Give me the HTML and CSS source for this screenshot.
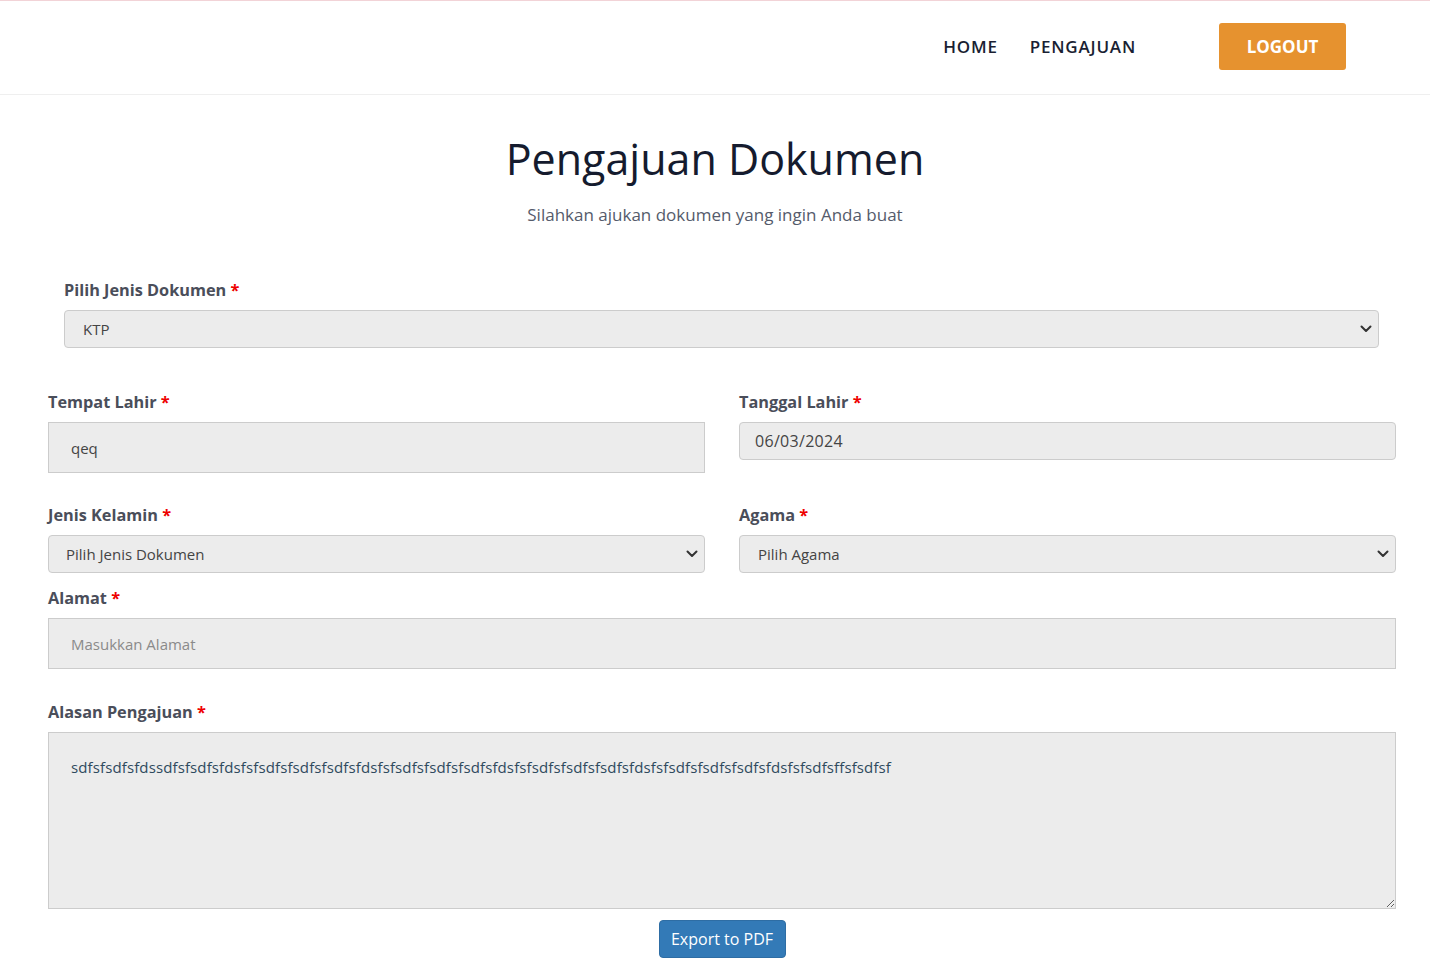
FILE: index.html
```html
<!DOCTYPE html>
<html lang="id">
<head>
<meta charset="utf-8">
<title>Pengajuan Dokumen</title>
<link rel="stylesheet" href="styles.css">
</head>
<body>
<header class="topbar">
  <nav class="nav">
    <a href="#" class="nav-link">HOME</a>
    <a href="#" class="nav-link">PENGAJUAN</a>
  </nav>
  <button class="logout">LOGOUT</button>
</header>
<main class="page">
  <div class="intro">
    <h1 class="title">Pengajuan Dokumen</h1>
    <p class="subtitle">Silahkan ajukan dokumen yang ingin Anda buat</p>
  </div>
  <form class="form">
    <div class="group group-top">
      <label class="label">Pilih Jenis Dokumen <span class="req">*</span></label>
      <div class="select-wrap">
        <select class="field select sel-top"><option>KTP</option></select>
        <svg class="chev" viewBox="0 0 12 8" width="12" height="8"><path d="M1.5 1.5 6 6l4.5-4.5" fill="none" stroke="#333" stroke-width="2" stroke-linecap="round" stroke-linejoin="round"/></svg>
      </div>
    </div>
    <div class="row row-2">
      <div class="group">
        <label class="label">Tempat Lahir <span class="req">*</span></label>
        <input class="field tall" type="text" value="qeq">
      </div>
      <div class="group">
        <label class="label">Tanggal Lahir <span class="req">*</span></label>
        <input class="field short date" type="text" value="06/03/2024">
      </div>
    </div>
    <div class="row row-3">
      <div class="group">
        <label class="label">Jenis Kelamin <span class="req">*</span></label>
        <div class="select-wrap">
          <select class="field select sel-left"><option>Pilih Jenis Dokumen</option></select>
          <svg class="chev" viewBox="0 0 12 8" width="12" height="8"><path d="M1.5 1.5 6 6l4.5-4.5" fill="none" stroke="#333" stroke-width="2" stroke-linecap="round" stroke-linejoin="round"/></svg>
        </div>
      </div>
      <div class="group">
        <label class="label">Agama <span class="req">*</span></label>
        <div class="select-wrap">
          <select class="field select sel-right"><option>Pilih Agama</option></select>
          <svg class="chev" viewBox="0 0 12 8" width="12" height="8"><path d="M1.5 1.5 6 6l4.5-4.5" fill="none" stroke="#333" stroke-width="2" stroke-linecap="round" stroke-linejoin="round"/></svg>
        </div>
      </div>
    </div>
    <div class="group group-alamat">
      <label class="label">Alamat <span class="req">*</span></label>
      <input class="field tall" type="text" placeholder="Masukkan Alamat">
    </div>
    <div class="group group-alasan">
      <label class="label">Alasan Pengajuan <span class="req">*</span></label>
      <textarea class="field area">sdfsfsdfsfdssdfsfsdfsfdsfsfsdfsfsdfsfsdfsfdsfsfsdfsfsdfsfsdfsfdsfsfsdfsfsdfsfsdfsfdsfsfsdfsfsdfsfsdfsfdsfsfsdfsffsfsdfsf</textarea>
    </div>
    <div class="actions">
      <button type="button" class="export">Export to PDF</button>
    </div>
  </form>
</main>
</body>
</html>
```

FILE: styles.css
```css
* { box-sizing: border-box; }
html, body { margin: 0; padding: 0; background: #fff; }
body {
  font-family: "Open Sans", "Noto Sans", Arial, sans-serif;
  color: #151b2e;
}
.topbar {
  height: 95px;
  border-top: 1px solid #f2d3d7;
  border-bottom: 1px solid #efefef;
  display: flex;
  align-items: center;
  justify-content: flex-end;
  padding-right: 84px;
  padding-bottom: 3px;
}
.nav { display: flex; gap: 32px; margin-right: 83px; }
.nav-link {
  color: #1a1f33;
  text-decoration: none;
  font-size: 17px;
  font-weight: 600;
  letter-spacing: 0.8px;
}
.logout {
  width: 127px;
  height: 47px;
  background: #e6922f;
  color: #fff;
  border: none;
  border-radius: 3px;
  font-family: inherit;
  font-size: 17px;
  font-weight: 700;
}
.page { padding: 0 34px 40px 48px; }
.intro { text-align: center; margin-left: -48px; margin-right: -34px; }
.title {
  margin: 37px 0 0;
  font-size: 43px;
  line-height: 54px;
  font-weight: 500;
  color: #151b2e;
}
.subtitle {
  margin: 17px 0 0;
  font-size: 17px;
  line-height: 24px;
  color: #555b6b;
}
.form { margin-top: 51px; }
.group-top { padding: 0 17px 0 16px; }
.label {
  display: block;
  font-size: 16.3px;
  line-height: 22px;
  font-weight: 700;
  color: #4a4e5a;
  padding-top: 1px;
  margin-bottom: 9px;
}
.req { color: #e00; }
.field {
  display: block;
  width: 100%;
  background: #ececec;
  border: 1px solid #cccccc;
  font-family: inherit;
  font-size: 15px;
  color: #444;
  outline: none;
}
.field::placeholder { color: #8a8a8a; }
.select-wrap { position: relative; }
.select {
  appearance: none;
  -webkit-appearance: none;
  height: 38px;
  border-radius: 4px;
  padding: 0 30px 0 18px;
}
.sel-left { padding-left: 17px; }
.chev { position: absolute; right: 7px; top: 15px; }
.row { display: grid; grid-template-columns: 1fr 1fr; column-gap: 34px; }
.row-2 { margin-top: 42px; align-items: start; }
.row-3 { margin-top: 30px; }
.tall { height: 51px; padding: 0 22px; border-radius: 0; }
.short { height: 38px; border-radius: 4px; padding: 0 15px; }
.date { font-size: 16px; letter-spacing: 0.3px; }
.group-alamat { margin-top: 13px; }
.group-alasan { margin-top: 31px; }
.area {
  height: 177px;
  padding: 24px 22px;
  line-height: 20px;
  resize: vertical;
  border-radius: 0;
  color: #2f4a5e;
  letter-spacing: 0.12px;
}
.actions { display: flex; justify-content: center; margin-top: 11px; }
.export {
  width: 127px;
  height: 38px;
  background: #337ab7;
  border: 1px solid #2e6da4;
  border-radius: 4px;
  color: #fff;
  font-family: inherit;
  font-size: 16px;
}
```
